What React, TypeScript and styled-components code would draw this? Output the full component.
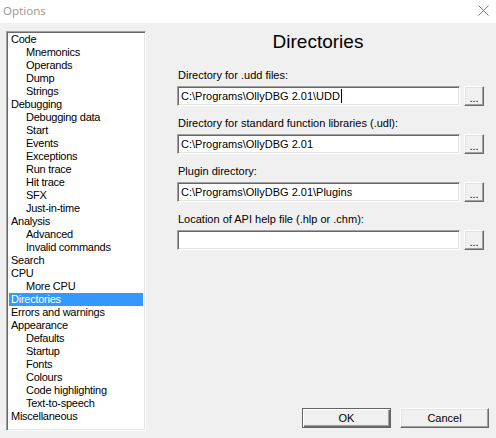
import React from "react";
import styled, { createGlobalStyle } from "styled-components";

const Global = createGlobalStyle`
  html, body { margin: 0; padding: 0; background: #f0f0f0; }
  body { font-family: "Liberation Sans", Arial, sans-serif; }
`;

const Window = styled.div`
  width: 496px;
  height: 438px;
  display: flex;
  flex-direction: column;
  background: #f0f0f0;
  overflow: hidden;
`;

const TitleBar = styled.div`
  height: 23px;
  background: #ffffff;
  display: flex;
  align-items: center;
  justify-content: space-between;
  padding: 0 7px 2px 3px;
  box-sizing: border-box;
`;

const TitleText = styled.span`
  font-family: "Noto Sans", "Open Sans", sans-serif;
  font-size: 11.5px;
  color: #9a9a9a;
`;

const Body = styled.div`
  flex: 1;
  display: flex;
  padding: 8px 6px 7px 6px;
  min-height: 0;
`;

const sunken = `
  border: 1px solid;
  border-color: #a0a0a0 #ffffff #ffffff #a0a0a0;
  box-shadow: inset 1px 1px #696969, inset -1px -1px #e3e3e3;
  background: #ffffff;
  box-sizing: border-box;
`;

const Tree = styled.div`
  ${sunken}
  width: 140px;
  height: 400px;
  padding: 1px 2px 2px 2px;
  display: flex;
  flex-direction: column;
`;

const TreeItem = styled.div<{ $child?: boolean; $selected?: boolean }>`
  height: 13px;
  line-height: 13px;
  font-size: 11px;
  letter-spacing: -0.25px;
  padding-left: ${(p) => (p.$child ? 17 : 2)}px;
  white-space: nowrap;
  color: ${(p) => (p.$selected ? "#ffffff" : "#000000")};
  background: ${(p) => (p.$selected ? "#3399ff" : "transparent")};
`;

const Panel = styled.div`
  flex: 1;
  display: flex;
  flex-direction: column;
`;

const Heading = styled.div`
  font-size: 19px;
  line-height: 22px;
  text-align: center;
  color: #000;
  margin-bottom: 16px;
`;

const Fields = styled.div`
  display: flex;
  flex-direction: column;
  gap: 11px;
  padding: 0 6px 0 31px;
`;

const Group = styled.div`
  display: flex;
  flex-direction: column;
  gap: 4px;
`;

const Label = styled.div`
  font-size: 11px;
  line-height: 13px;
  padding-left: 1px;
  color: #000;
`;

const Row = styled.div`
  display: flex;
  gap: 4px;
  height: 20px;
`;

const Field = styled.div`
  ${sunken}
  flex: 1;
  height: 20px;
  font-size: 11px;
  line-height: 16px;
  padding: 2px 3px;
  white-space: nowrap;
  display: flex;
  align-items: center;
`;

const Caret = styled.span`
  display: inline-block;
  width: 1px;
  height: 14px;
  background: #000;
  margin-left: 1px;
`;

const raised = `
  border: 1px solid;
  border-color: #ffffff #696969 #696969 #ffffff;
  box-shadow: inset -1px -1px #a0a0a0, inset 1px 1px #e3e3e3;
  background: #f0f0f0;
  box-sizing: border-box;
`;

const BrowseButton = styled.div`
  ${raised}
  width: 20px;
  height: 20px;
  font-size: 11px;
  line-height: 20px;
  text-align: center;
  padding-top: 1px;
`;

const Footer = styled.div`
  margin-top: auto;
  margin-bottom: 3px;
  display: flex;
  justify-content: flex-end;
  gap: 9px;
  padding-right: 1px;
`;

const DialogButton = styled.div<{ $default?: boolean }>`
  width: 89px;
  height: 20px;
  box-sizing: border-box;
  font-size: 11px;
  display: flex;
  align-items: center;
  justify-content: center;
  ${(p) =>
    p.$default
      ? `border: 1px solid #646464;
         background: #f0f0f0;
         box-shadow: inset 1px 1px #ffffff, inset -1px -1px #696969, inset -2px -2px #a0a0a0;`
      : raised}
`;

type Item = { label: string; child?: boolean };

const items: Item[] = [
  { label: "Code" },
  { label: "Mnemonics", child: true },
  { label: "Operands", child: true },
  { label: "Dump", child: true },
  { label: "Strings", child: true },
  { label: "Debugging" },
  { label: "Debugging data", child: true },
  { label: "Start", child: true },
  { label: "Events", child: true },
  { label: "Exceptions", child: true },
  { label: "Run trace", child: true },
  { label: "Hit trace", child: true },
  { label: "SFX", child: true },
  { label: "Just-in-time", child: true },
  { label: "Analysis" },
  { label: "Advanced", child: true },
  { label: "Invalid commands", child: true },
  { label: "Search" },
  { label: "CPU" },
  { label: "More CPU", child: true },
  { label: "Directories" },
  { label: "Errors and warnings" },
  { label: "Appearance" },
  { label: "Defaults", child: true },
  { label: "Startup", child: true },
  { label: "Fonts", child: true },
  { label: "Colours", child: true },
  { label: "Code highlighting", child: true },
  { label: "Text-to-speech", child: true },
  { label: "Miscellaneous" },
];

const fields = [
  { label: "Directory for .udd files:", value: "C:\\Programs\\OllyDBG 2.01\\UDD", caret: true },
  { label: "Directory for standard function libraries (.udl):", value: "C:\\Programs\\OllyDBG 2.01" },
  { label: "Plugin directory:", value: "C:\\Programs\\OllyDBG 2.01\\Plugins" },
  { label: "Location of API help file (.hlp or .chm):", value: "" },
];

export default function App() {
  return (
    <Window>
      <Global />
      <TitleBar>
        <TitleText>Options</TitleText>
        <svg width="11" height="11" viewBox="0 0 11 11">
          <path d="M0.5 0.5 L10.5 10.5 M10.5 0.5 L0.5 10.5" stroke="#7a7a7a" strokeWidth="1" fill="none" />
        </svg>
      </TitleBar>
      <Body>
        <Tree>
          {items.map((it) => (
            <TreeItem key={it.label} $child={it.child} $selected={it.label === "Directories"}>
              {it.label}
            </TreeItem>
          ))}
        </Tree>
        <Panel>
          <Heading>Directories</Heading>
          <Fields>
            {fields.map((f) => (
              <Group key={f.label}>
                <Label>{f.label}</Label>
                <Row>
                  <Field>
                    {f.value}
                    {f.caret && <Caret />}
                  </Field>
                  <BrowseButton>...</BrowseButton>
                </Row>
              </Group>
            ))}
          </Fields>
          <Footer>
            <DialogButton $default>OK</DialogButton>
            <DialogButton>Cancel</DialogButton>
          </Footer>
        </Panel>
      </Body>
    </Window>
  );
}
